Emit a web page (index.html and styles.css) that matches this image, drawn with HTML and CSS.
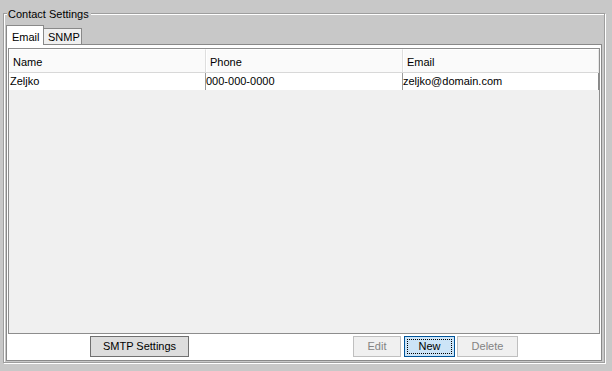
FILE: index.html
```html
<!DOCTYPE html>
<html>
<head>
<meta charset="utf-8">
<link rel="stylesheet" href="styles.css">
</head>
<body>
<div class="group">
  <span class="legend">Contact Settings</span>
  <div class="tabs">
    <div class="tab tab-active">Email</div>
    <div class="tab tab-idle">SNMP</div>
  </div>
  <div class="panel">
    <div class="scroll">
      <div class="thead">
        <div class="th th-name">Name</div>
        <div class="th th-phone">Phone</div>
        <div class="th th-email">Email</div>
      </div>
      <div class="tr">
        <div class="td td-name">Zeljko</div>
        <div class="td td-phone">000-000-0000</div>
        <div class="td td-email">zeljko@domain.com</div>
      </div>
    </div>
    <div class="buttons">
      <button class="btn btn-smtp">SMTP Settings</button>
      <button class="btn btn-disabled btn-edit">Edit</button>
      <button class="btn btn-focus btn-new"><span class="focus">New</span></button>
      <button class="btn btn-disabled btn-delete">Delete</button>
    </div>
  </div>
</div>
</body>
</html>
```

FILE: styles.css
```css
html, body {
  margin: 0;
  padding: 0;
  background: #c8c8c8;
  font-family: "Liberation Sans", Arial, sans-serif;
  font-size: 11px;
  color: #000;
}

body {
  width: 612px;
  height: 371px;
  overflow: hidden;
}

.group {
  position: relative;
  margin: 13px 0 0 3px;
  width: 598px;
  height: 337px;
  border: 1px solid #9e9e9e;
  box-shadow: inset 1px 1px 0 #ffffff, 1px 1px 0 #ffffff;
  padding: 11px 0 0 2px;
  box-sizing: content-box;
}

.legend {
  position: absolute;
  top: -7px;
  left: 3px;
  padding: 0 2px 0 1px;
  line-height: 14px;
  background: #c8c8c8;
  color: #000;
}

.tabs {
  display: flex;
  align-items: flex-end;
  height: 19px;
}

.tab {
  box-sizing: border-box;
  border: 1px solid #898989;
  border-bottom: none;
  line-height: 14px;
}

.tab-active {
  position: relative;
  z-index: 2;
  width: 38px;
  height: 20px;
  margin-bottom: -1px;
  background: #ffffff;
  padding: 4px 0 0 5px;
}

.tab-idle {
  width: 39px;
  height: 16px;
  margin-left: -1px;
  background: #f0f0f0;
  padding: 1px 0 0 4px;
}

.panel {
  box-sizing: border-box;
  width: 596px;
  height: 317px;
  border: 1px solid #898989;
  background: #ffffff;
  padding: 3px 1px 0 1px;
  display: flex;
  flex-direction: column;
}

.scroll {
  box-sizing: border-box;
  width: 592px;
  height: 286px;
  border: 1px solid #8d8d8d;
  background: #f0f0f0;
}

.thead, .tr {
  display: flex;
}

.th {
  box-sizing: border-box;
  height: 24px;
  padding: 5px 0 0 4px;
  line-height: 14px;
  background: #fafafa;
  border-top: 1px solid #ffffff;
  border-bottom: 1px solid #d8d8d8;
  border-right: 1px solid #dedede;
  box-shadow: inset 1px 0 0 #ffffff;
}

.th-name { width: 197px; }
.th-phone { width: 197px; }
.th-email { width: 196px; border-right-color: #e6e6e6; }

.tr {
  background: #ffffff;
}

.td {
  box-sizing: border-box;
  height: 17px;
  line-height: 16px;
  padding-left: 1px;
  border-right: 1px solid #9a9a9a;
  white-space: nowrap;
}

.td-name { width: 197px; }
.td-phone { width: 197px; padding-left: 0; }
.td-email { width: 196px; padding-left: 0; border-right-color: #8a8a8a; }

.buttons {
  display: flex;
  margin-top: 2px;
  padding-left: 82px;
}

.btn {
  box-sizing: border-box;
  height: 21px;
  margin: 0;
  padding: 0;
  font-family: "Liberation Sans", Arial, sans-serif;
  font-size: 11px;
  line-height: 19px;
  color: #000;
  background: #e1e1e1;
  border: 1px solid #adadad;
  text-align: center;
}

.btn-smtp {
  width: 99px;
  background: #dddddd;
  border-color: #707070;
}

.btn-disabled {
  background: #f0f0f0;
  border-color: #bfbfbf;
  color: #838383;
}

.btn-edit {
  width: 48px;
  margin-left: 164px;
}

.btn-new {
  width: 51px;
  margin-left: 3px;
  background: #cce4f7;
  border-color: #005499;
  padding: 2px;
}

.focus {
  display: block;
  height: 15px;
  line-height: 13px;
  border: 1px dotted #000;
  box-sizing: border-box;
}

.btn-delete {
  width: 61px;
  margin-left: 2px;
}
```
